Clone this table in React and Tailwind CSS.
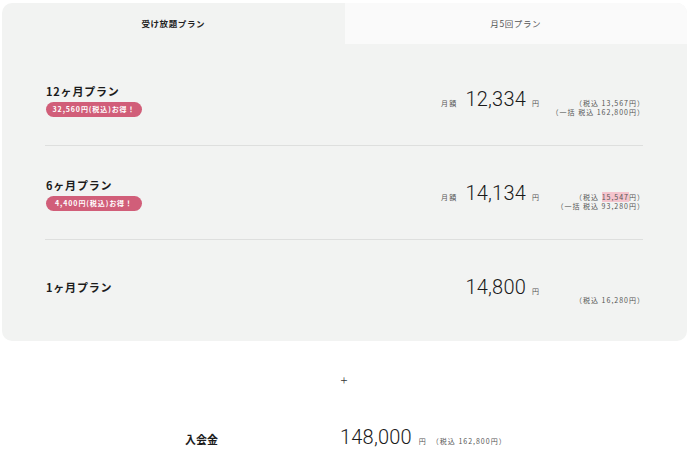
import React from 'react';

const jp = { fontFamily: '"Noto Sans CJK JP", "Noto Sans", sans-serif' };
const num = { fontFamily: 'Roboto, "Liberation Sans", sans-serif' };

const plans = [
  {
    name: '12ヶ月プラン',
    badge: '32,560円(税込)お得！',
    monthly: true,
    price: '12,334',
    notes: [
      <>（税込 13,567円）</>,
      <>（一括 税込 162,800円）</>,
    ],
  },
  {
    name: '6ヶ月プラン',
    badge: '4,400円(税込)お得！',
    monthly: true,
    price: '14,134',
    notes: [
      <>（税込 <span className="bg-[#f4c4cd]">15,547</span>円）</>,
      <>（一括 税込 93,280円）</>,
    ],
  },
  {
    name: '1ヶ月プラン',
    badge: null,
    monthly: false,
    price: '14,800',
    notes: [<>（税込 16,280円）</>],
  },
];

const PlanRow = ({ plan, last }) => (
  <div className={`h-[94px] flex items-center justify-between ${last ? '' : 'border-b border-[#dedfde]'}`}>
    <div className={`pl-[1px] flex flex-col ${plan.badge ? 'mt-[3px]' : ''}`}>
      <div className="text-[11px] leading-[14px] font-bold tracking-[0.8px] text-[#1c1c1c]">{plan.name}</div>
      {plan.badge && (
        <div className="mt-[4px] w-[96px] h-[15px] rounded-full bg-[#d15e79] text-white text-[7px] font-bold tracking-[0.9px] flex items-center justify-center">
          {plan.badge}
        </div>
      )}
    </div>
    <div className="flex items-end">
      <div className="flex items-baseline">
        {plan.monthly && (
          <span className="text-[7px] tracking-[1.2px] text-[#555] mr-[8px]">月額</span>
        )}
        <span style={num} className="text-[20px] leading-[26px] font-light tracking-[0.2px] text-[#1a1a1a]">{plan.price}</span>
        <span className="text-[7px] text-[#555] ml-[6px]">円</span>
      </div>
      <div className="w-[106px] mr-[-2px] mb-[-5px] flex flex-col items-end text-[7px] leading-[9px] tracking-[1px] text-[#555]">
        {plan.notes.map((n, i) => (
          <div key={i}>{n}</div>
        ))}
      </div>
    </div>
  </div>
);

export default function App() {
  return (
    <div style={jp} className="w-[700px] h-[458px] bg-white overflow-hidden pt-[3px] pl-[2px]">
      <div className="w-[685px] rounded-[10px] bg-[#f2f3f2]">
        <div className="flex h-[41px]">
          <div className="flex-1 flex items-center justify-center text-[8.5px] font-bold tracking-[0.6px] text-[#222]">
            受け放題プラン
          </div>
          <div className="flex-1 flex items-center justify-center bg-[#fafafa] rounded-tr-[10px] text-[8.5px] tracking-[0.6px] text-[#555]">
            月5回プラン
          </div>
        </div>
        <div className="pt-[8px] pb-[7px] pl-[43px] pr-[44px]">
          {plans.map((p, i) => (
            <PlanRow key={p.name} plan={p} last={i === plans.length - 1} />
          ))}
        </div>
      </div>

      <div className="mt-[30px] h-[18px] leading-[18px] text-center text-[13px] font-light text-[#333] pr-[14px]">+</div>

      <div className="mt-[35px] flex items-baseline pl-[183px]">
        <span className="w-[155px] text-[11px] font-bold text-[#1c1c1c]">入会金</span>
        <span style={num} className="text-[20px] leading-[26px] font-light tracking-[0.2px] text-[#1a1a1a]">148,000</span>
        <span className="text-[7px] text-[#555] ml-[7px]">円</span>
        <span className="text-[7px] tracking-[1px] text-[#555] ml-[6px]">（税込 162,800円）</span>
      </div>
    </div>
  );
}
